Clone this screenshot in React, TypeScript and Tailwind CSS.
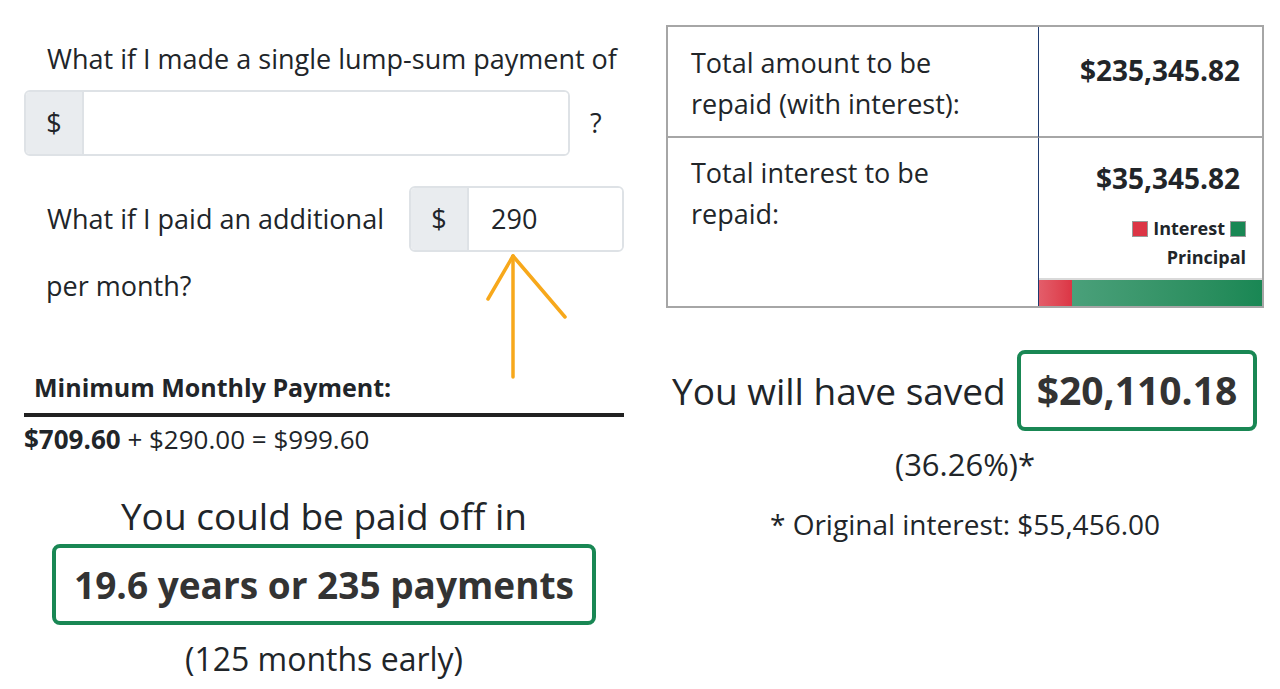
import React from 'react';

const font = { fontFamily: '"Open Sans", "Noto Sans", sans-serif' };

function InputGroup({ value, className }: { value?: string; className: string }) {
    return (
        <div className={`flex items-stretch rounded-[6px] border-2 border-[#dee2e6] overflow-hidden ${className}`}>
            <div className="w-[58px] bg-[#e9ecef] border-r-2 border-[#dee2e6] flex items-center justify-center text-[27px] text-[#212529]">
                $
            </div>
            <div className="flex-1 bg-white flex items-center pl-[22px] text-[27px] text-[#212529]">
                {value}
            </div>
        </div>
    );
}

export default function App() {
    return (
        <div className="w-[1280px] h-[689px] bg-white relative overflow-hidden text-[#212529]" style={font}>
            <div className="flex">
                {/* Left column */}
                <div className="w-[600px] ml-[24px] flex flex-col">
                    <p className="mt-[39px] pl-[23px] h-[40px] leading-[40px] text-[27px] whitespace-nowrap">
                        What if I made a single lump-sum payment of
                    </p>
                    <div className="mt-[11px] flex items-center">
                        <InputGroup className="w-[546px] h-[66px]" />
                        <span className="ml-[20px] text-[27px]">?</span>
                    </div>
                    <div className="mt-[30px] flex items-center">
                        <span className="pl-[23px] text-[27px] whitespace-nowrap">What if I paid an additional</span>
                        <InputGroup value="290" className="ml-auto w-[215px] h-[66px]" />
                    </div>
                    <p className="mt-[14px] pl-[22px] h-[40px] leading-[40px] text-[27px]">per month?</p>

                    <p className="mt-[61px] pl-[10px] h-[40px] leading-[40px] text-[25px] font-bold text-[#212529]">
                        Minimum Monthly Payment:
                    </p>
                    <div className="mt-[6px] h-[4px] bg-[#212121]" />
                    <p className="mt-[4px] h-[36px] leading-[36px] text-[26px]">
                        <span className="font-bold">$709.60</span> + $290.00 = $999.60
                    </p>

                    <p className="mt-[37px] h-[44px] leading-[44px] text-[37px] text-center">You could be paid off in</p>
                    <div className="mt-[6px] mx-auto w-[544px] h-[81px] border-[4px] border-[#198754] rounded-[8px] flex items-center justify-center">
                        <span className="text-[37px] font-bold text-[#333333] whitespace-nowrap">19.6 years or 235 payments</span>
                    </div>
                    <p className="mt-[14px] h-[40px] leading-[40px] text-[32px] text-center">(125 months early)</p>
                </div>

                {/* Right column */}
                <div className="w-[598px] ml-[42px] flex flex-col">
                    <div className="mt-[25px] border-2 border-[#a6a6a6] grid grid-cols-[371px_1fr]">
                        <div className="h-[111px] pl-[23px] pt-[15px] text-[27px] leading-[41px] border-r border-[#1e3a6e] border-b-2 border-b-[#a6a6a6]">
                            Total amount to be<br />repaid (with interest):
                        </div>
                        <div className="h-[111px] pr-[22px] pt-[22px] text-right text-[28px] font-bold text-[#212529] border-b-2 border-[#a6a6a6]">
                            $235,345.82
                        </div>
                        <div className="h-[168px] pl-[23px] pt-[14px] text-[27px] leading-[41px] border-r border-[#1e3a6e]">
                            Total interest to be<br />repaid:
                        </div>
                        <div className="h-[168px] flex flex-col">
                            <div className="pr-[22px] pt-[22px] text-right text-[28px] font-bold leading-[36px]">$35,345.82</div>
                            <div className="pr-[16px] mt-[18px] flex flex-col items-end text-[18px] font-bold leading-[29px]">
                                <div className="flex items-center gap-[5px]">
                                    <span className="w-[16px] h-[16px] bg-[#dc3545] border border-[#9a9a9a]" />
                                    <span>Interest</span>
                                    <span className="w-[16px] h-[16px] bg-[#198754] border border-[#9a9a9a]" />
                                </div>
                                <span>Principal</span>
                            </div>
                            <div className="mt-auto h-[28px] flex border-t-2 border-[#d9d9d9]">
                                <div className="w-[33px] bg-gradient-to-r from-[#e35d6a] to-[#dc3545]" />
                                <div className="flex-1 bg-gradient-to-r from-[#4aa07a] to-[#198754]" />
                            </div>
                        </div>
                    </div>

                    <div className="mt-[42px] flex items-center">
                        <span className="ml-[6px] text-[37px] whitespace-nowrap">You will have saved</span>
                        <div className="ml-auto mr-[7px] w-[240px] h-[81px] border-[4px] border-[#198754] rounded-[8px] flex items-center justify-center">
                            <span className="text-[39px] font-bold text-[#333333]">$20,110.18</span>
                        </div>
                    </div>
                    <p className="mt-[13px] h-[40px] leading-[40px] text-[31px] text-center">(36.26%)*</p>
                    <p className="mt-[20px] h-[40px] leading-[40px] text-[28px] text-center">* Original interest: $55,456.00</p>
                </div>
            </div>

            {/* hand-drawn arrow annotation */}
            <svg className="absolute left-0 top-0 pointer-events-none" width="1280" height="689">
                <g stroke="#f7a81b" strokeWidth="3.5" strokeLinecap="round" fill="none">
                    <path d="M513 377 L513 256" />
                    <path d="M488 299 L513 256" />
                    <path d="M513 256 L565 317" />
                </g>
            </svg>
        </div>
    );
}
